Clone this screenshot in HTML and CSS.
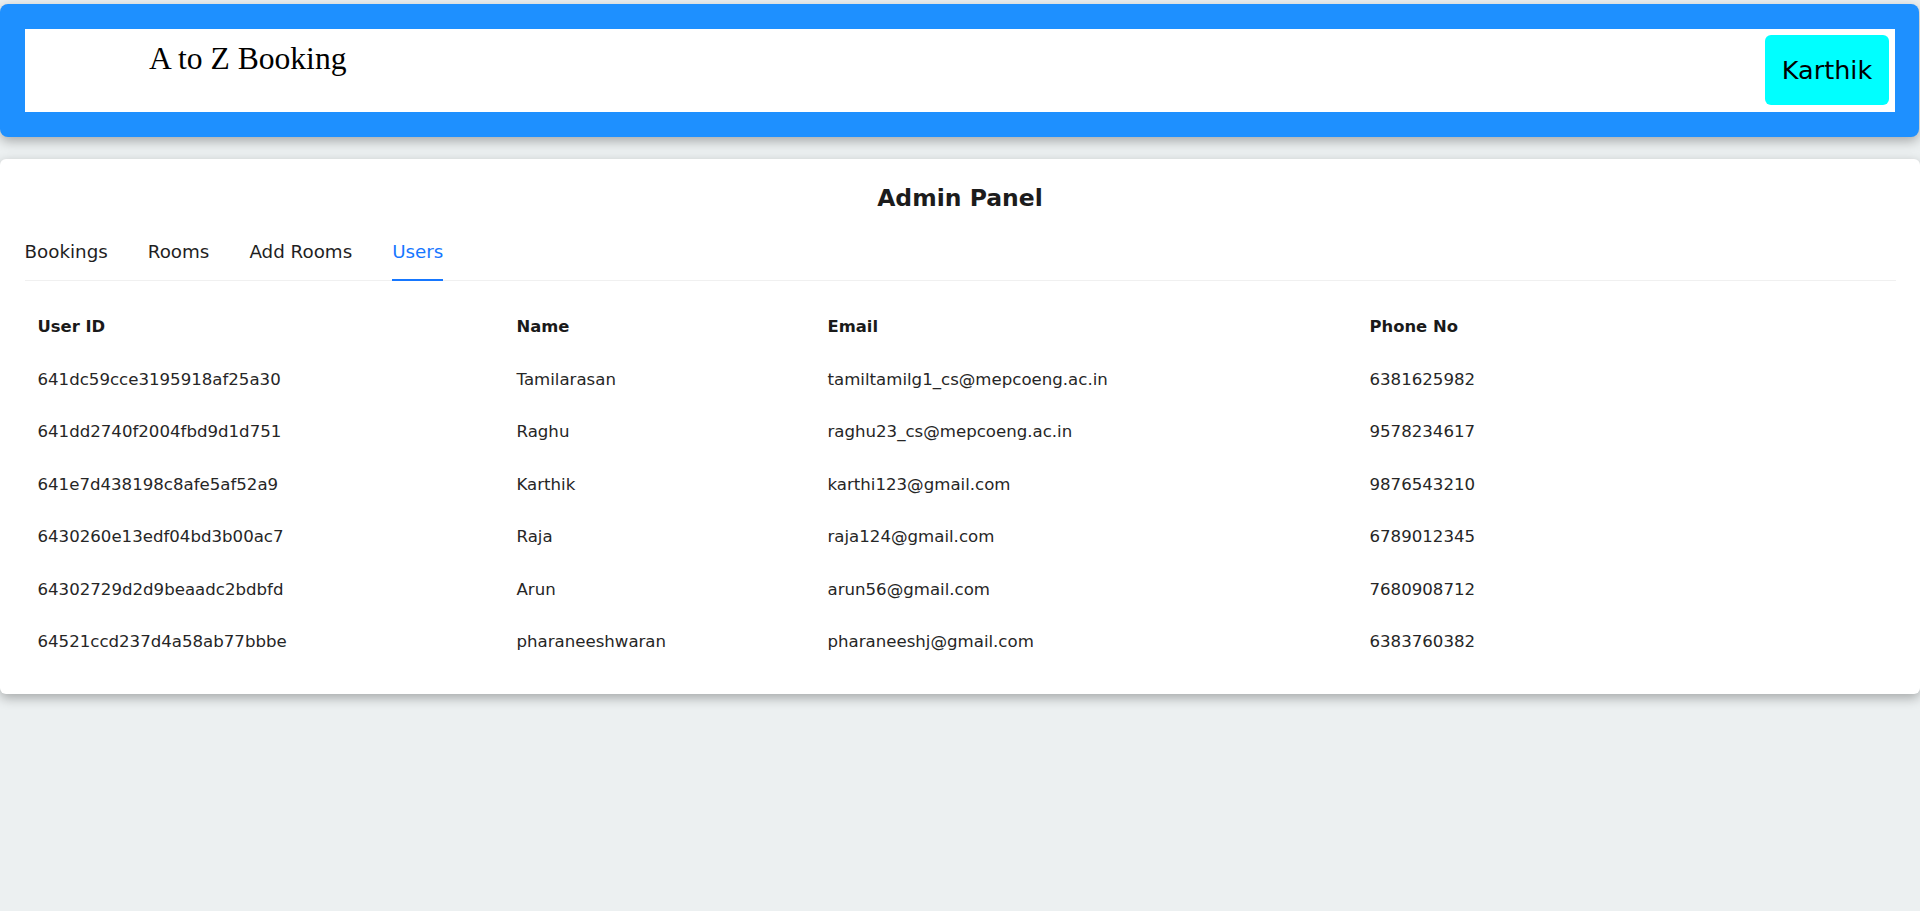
FILE: index.html
```html
<!DOCTYPE html>
<html lang="en">
<head>
<meta charset="utf-8">
<title>A to Z Booking - Admin</title>
<link rel="stylesheet" href="styles.css">
</head>
<body>
  <header class="topbar">
    <div class="topbar-inner">
      <div class="brand">A to Z Booking</div>
      <button class="user-btn" type="button">Karthik</button>
    </div>
  </header>

  <main class="panel">
    <h1 class="panel-title">Admin Panel</h1>
    <nav class="tabs">
      <span class="tab">Bookings</span>
      <span class="tab">Rooms</span>
      <span class="tab">Add Rooms</span>
      <span class="tab tab-active">Users</span>
    </nav>
    <table class="users">
      <colgroup>
        <col class="c1"><col class="c2"><col class="c3"><col class="c4">
      </colgroup>
      <thead>
        <tr><th>User ID</th><th>Name</th><th>Email</th><th>Phone No</th></tr>
      </thead>
      <tbody>
        <tr><td>641dc59cce3195918af25a30</td><td>Tamilarasan</td><td>tamiltamilg1_cs@mepcoeng.ac.in</td><td>6381625982</td></tr>
        <tr><td>641dd2740f2004fbd9d1d751</td><td>Raghu</td><td>raghu23_cs@mepcoeng.ac.in</td><td>9578234617</td></tr>
        <tr><td>641e7d438198c8afe5af52a9</td><td>Karthik</td><td>karthi123@gmail.com</td><td>9876543210</td></tr>
        <tr><td>6430260e13edf04bd3b00ac7</td><td>Raja</td><td>raja124@gmail.com</td><td>6789012345</td></tr>
        <tr><td>64302729d2d9beaadc2bdbfd</td><td>Arun</td><td>arun56@gmail.com</td><td>7680908712</td></tr>
        <tr><td>64521ccd237d4a58ab77bbbe</td><td>pharaneeshwaran</td><td>pharaneeshj@gmail.com</td><td>6383760382</td></tr>
      </tbody>
    </table>
  </main>
</body>
</html>
```

FILE: styles.css
```css
* { box-sizing: border-box; }

html, body {
  margin: 0;
  padding: 0;
}

body {
  background: #ecf0f1;
  padding-top: 4px;
  min-height: 911px;
  font-family: "DejaVu Sans", "Noto Sans", sans-serif;
  color: #212121;
}

.topbar {
  background: #1e90ff;
  padding: 25px 24px 25px 25px;
  margin-right: 1px;
  border-radius: 8px;
  box-shadow: 0 4px 12px rgba(0, 0, 0, 0.3);
}

.topbar-inner {
  background: #ffffff;
  height: 83px;
  display: flex;
  justify-content: space-between;
  align-items: flex-start;
}

.brand {
  font-family: "Liberation Serif", "Times New Roman", serif;
  font-size: 31.6px;
  line-height: 36px;
  color: #000;
  padding-top: 12px;
  margin-left: 124px;
}

.user-btn {
  width: 124px;
  height: 70px;
  margin: 6px 6px 0 0;
  background: #00ffff;
  border: none;
  border-radius: 6px;
  font-family: "DejaVu Sans", sans-serif;
  font-size: 25.5px;
  color: #000;
  padding: 0;
}

.panel {
  margin-top: 22px;
  background: #ffffff;
  border-radius: 6px;
  padding: 0 24.5px 25px;
  box-shadow: 0 4px 12px rgba(0, 0, 0, 0.3);
}

.panel-title {
  margin: 0;
  padding-top: 23px;
  text-align: center;
  font-size: 23.5px;
  line-height: 32px;
  font-weight: bold;
  color: #1c1c1c;
}

.tabs {
  margin-top: 14px;
  display: flex;
  gap: 40px;
  border-bottom: 1px solid #f0f0f0;
}

.tab {
  position: relative;
  padding: 12px 0 16px;
  font-size: 18.3px;
  line-height: 24px;
  color: #1f1f1f;
}

.tab-active {
  color: #1677ff;
}

.tab-active::after {
  content: "";
  position: absolute;
  left: 0;
  right: 0;
  bottom: -1px;
  height: 2px;
  background: #1677ff;
}

.users {
  margin-top: 20px;
  width: 100%;
  border-collapse: collapse;
  table-layout: fixed;
}

.c1 { width: 479px; }
.c2 { width: 311px; }
.c3 { width: 542px; }
.c4 { width: auto; }

.users th,
.users td {
  text-align: left;
  padding: 16px 13px;
  line-height: 20.5px;
  font-size: 16.6px;
  white-space: nowrap;
}

.users th {
  font-weight: bold;
  font-size: 16.4px;
  color: #1a1a1a;
}

.users td {
  font-weight: normal;
  color: #262626;
}
```
